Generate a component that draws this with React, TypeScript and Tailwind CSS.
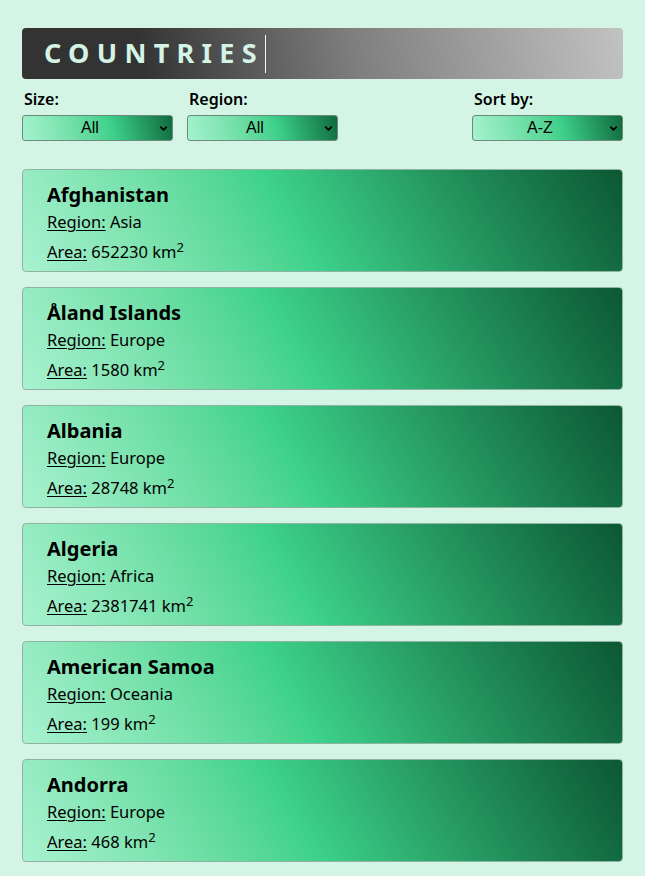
import { ChevronDown } from 'lucide-react';

const countries = [
    { name: 'Afghanistan', region: 'Asia', area: 652230 },
    { name: 'Åland Islands', region: 'Europe', area: 1580 },
    { name: 'Albania', region: 'Europe', area: 28748 },
    { name: 'Algeria', region: 'Africa', area: 2381741 },
    { name: 'American Samoa', region: 'Oceania', area: 199 },
    { name: 'Andorra', region: 'Europe', area: 468 },
];

function Filter({ label, value, className }: { label: string; value: string; className?: string }) {
    return (
        <div className={`flex flex-col ${className ?? ''}`}>
            <label className="mb-[6px] pl-[2px] text-[16px] leading-[20px] font-semibold text-black">
                {label}
            </label>
            <div className="relative h-[26px] w-[151px]">
                <select
                    defaultValue={value}
                    className="h-full w-full appearance-none rounded-[3px] border border-[#6b8a7a] bg-linear-75 from-[#a5f3cf] via-[#3ccf8a] via-60% to-[#0f6a3d] pr-[15px] text-center font-['Liberation_Sans',sans-serif] text-[16px] text-black [text-align-last:center]"
                >
                    <option>{value}</option>
                </select>
                <ChevronDown
                    className="pointer-events-none absolute top-[8px] right-[4px] h-[11px] w-[11px] text-black"
                    strokeWidth={4}
                />
            </div>
        </div>
    );
}

export default function App() {
    return (
        <div className="min-h-screen bg-[#d4f5e6] px-[22px] pt-[28px] pb-4 font-['Noto_Sans',sans-serif]">
            <header className="flex h-[51px] items-center rounded-[4px] bg-linear-[80deg] from-[#333333] from-20% via-[#7e7e7e] via-55% to-[#c2c2c2] pl-[22px]">
                <h1 className="flex h-[38px] items-center border-r border-[#e8fff4] pr-[1px] text-[27px] font-bold tracking-[0.27em] text-[#d4f5e6]">
                    COUNTRIES
                </h1>
            </header>

            <div className="mt-[10px] flex">
                <Filter label="Size:" value="All" />
                <Filter label="Region:" value="All" className="ml-[14px]" />
                <Filter label="Sort by:" value="A-Z" className="ml-auto" />
            </div>

            <ul className="mt-[28px] flex flex-col gap-[15px]">
                {countries.map((c) => (
                    <li
                        key={c.name}
                        className="h-[103px] rounded-[4px] border border-[#8fb3a1] bg-linear-60 from-[#a8f2d0] via-[#3dd28b] via-45% to-[#0b5833] px-[24px] pt-[12px] text-black"
                    >
                        <h2 className="text-[20px] leading-[26px] font-bold">{c.name}</h2>
                        <p className="mt-[2px] text-[16.5px] leading-[24px]">
                            <span className="underline underline-offset-2">Region:</span> {c.region}
                        </p>
                        <p className="mt-[6px] text-[16.5px] leading-[24px]">
                            <span className="underline underline-offset-2">Area:</span> {c.area} km
                            <sup className="text-[13px]">2</sup>
                        </p>
                    </li>
                ))}
            </ul>
        </div>
    );
}
